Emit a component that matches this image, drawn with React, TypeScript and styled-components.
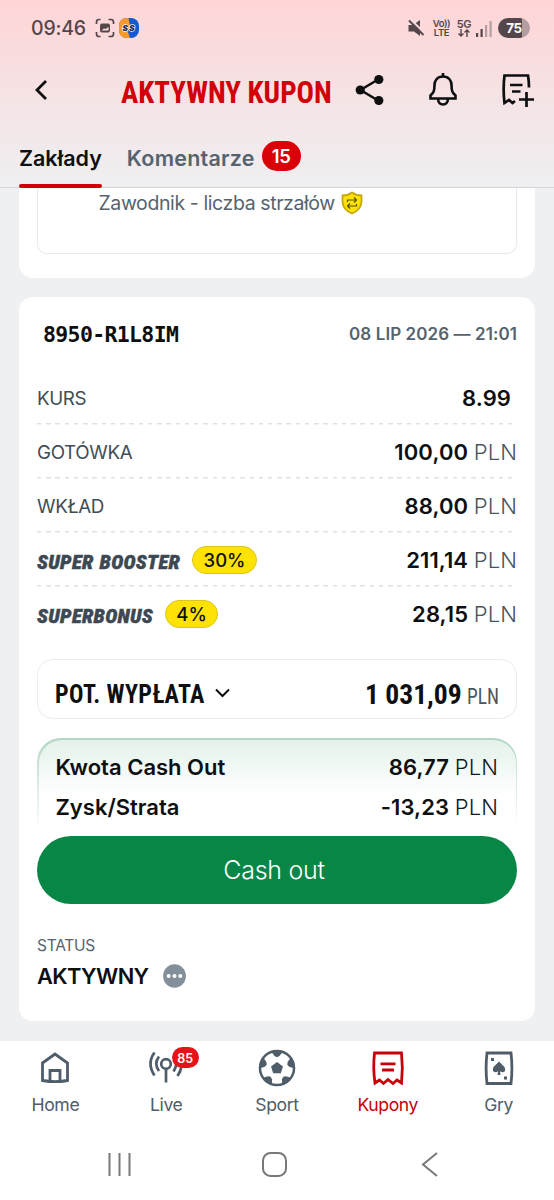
import React from 'react';
import styled, { createGlobalStyle } from 'styled-components';

const Global = createGlobalStyle`
  * { box-sizing: border-box; }
  html, body { margin: 0; padding: 0; }
  body { background: #eff0f2; font-family: Inter, 'Noto Sans', sans-serif; color: #0d0f11; }
`;

const Screen = styled.div`
  width: 554px;
  height: 1200px;
  display: flex;
  flex-direction: column;
  overflow: hidden;
  background: #eff0f2;
`;

const Header = styled.header`
  flex: none;
  height: 188px;
  display: flex;
  flex-direction: column;
  background: linear-gradient(#ffd5d6 0, #f9dddf 60px, #f4e5e6 110px, #f1eaec 150px, #efeff1 187px);
  box-shadow: inset 0 -1px 0 #d3d5d8;
`;

const StatusBar = styled.div`
  height: 56px;
  display: flex;
  align-items: center;
  padding: 0 24px 0 31px;
  color: #54464a;
`;

const Clock = styled.span`
  width: 64px;
  font-size: 19.5px;
  font-weight: 500;
  line-height: 24px;
  letter-spacing: -0.2px;
`;

const Gap = styled.span`
  flex: 1;
`;

const Network = styled.span<{ $w: number }>`
  width: ${(p) => p.$w}px;
  display: flex;
  flex-direction: column;
  align-items: center;
  font-size: 9.5px;
  font-weight: 600;
  line-height: 9px;
  white-space: nowrap;
  letter-spacing: -0.4px;
`;

const Generation = styled.span`
  font-size: 11px;
`;

const Battery = styled.span`
  width: 32px;
  height: 20px;
  margin-left: 6px;
  border-radius: 10px;
  background: linear-gradient(90deg, #54464a 75%, #b39ea2 75%);
  color: #fff;
  font-size: 13.5px;
  font-weight: 700;
  line-height: 20px;
  letter-spacing: -0.3px;
  text-align: center;
`;

const TitleRow = styled.div`
  height: 68px;
  display: flex;
  align-items: center;
  padding: 0 18px 0 33px;
`;

const Title = styled.h1`
  width: 210px;
  margin: 6px 24px 0 71px;
  font: 700 31px/36px Roboto, sans-serif;
  font-stretch: 75%;
  color: #d20008;
  white-space: nowrap;
`;

const Condensed = styled.span<{ $x: number }>`
  display: inline-block;
  transform: scaleX(${(p) => p.$x});
  transform-origin: left center;
`;

const Tabs = styled.nav`
  flex: 1;
  display: flex;
  padding-left: 19px;
`;

const Tab = styled.div<{ $active?: boolean }>`
  position: relative;
  display: flex;
  align-items: center;
  height: 64px;
  padding-top: 4px;
  margin-right: 25px;
  font-size: 21.5px;
  font-weight: ${(p) => (p.$active ? 570 : 600)};
  letter-spacing: ${(p) => (p.$active ? 0 : 0.22)}px;
  white-space: nowrap;
  color: ${(p) => (p.$active ? '#0d0f11' : '#56636e')};

  &::after {
    content: '';
    display: ${(p) => (p.$active ? 'block' : 'none')};
    position: absolute;
    left: 0;
    right: 0;
    bottom: 0;
    height: 4.5px;
    border-radius: 2px;
    background: #d20008;
  }
`;

const Count = styled.span`
  width: 39px;
  height: 30px;
  margin: -4px 0 0 7px;
  border-radius: 15px;
  background: #d90007;
  color: #fff;
  font-size: 18.5px;
  letter-spacing: -0.3px;
  line-height: 30px;
  text-align: center;
`;

const Content = styled.main`
  flex: 1;
  padding: 0 19px;
`;

const BetCard = styled.section`
  height: 90px;
  padding: 0 18px;
  background: #fff;
  border-radius: 0 0 14px 14px;
`;

const Bet = styled.div`
  height: 66px;
  display: flex;
  padding: 3px 0 0 60.5px;
  border: 1.5px solid #e8e9eb;
  border-top: 0;
  border-radius: 0 0 10px 10px;
  font-size: 19.5px;
  font-weight: 370;
  line-height: 24px;
  letter-spacing: -0.4px;
  color: #56636e;
  white-space: nowrap;
`;

const Market = styled.span`
  width: 242px;
`;

const Coupon = styled.section`
  height: 724px;
  margin-top: 19px;
  padding: 20px 18px 0;
  background: #fff;
  border-radius: 14px;
`;

const CouponHead = styled.div`
  height: 54px;
  display: flex;
  justify-content: space-between;
  padding-left: 6px;
  line-height: 35px;
  white-space: nowrap;
`;

const Code = styled.span`
  font: 700 21.5px/36px 'DejaVu Sans Mono', monospace;
  letter-spacing: -0.65px;
`;

const When = styled.span`
  font-size: 17px;
  font-weight: 580;
  letter-spacing: 0.08px;
  color: #56636e;
`;

const Row = styled.div<{ $last?: boolean }>`
  height: 54px;
  display: flex;
  align-items: center;
  background: ${(p) =>
    p.$last ? 'none' : 'repeating-linear-gradient(90deg, #dfe0e2 0 4.4px, #fff 4.4px 9.24px) 0 52px / 475px 1.5px no-repeat'};
`;

const Label = styled.span`
  font-size: 18.8px;
  font-weight: 370;
  letter-spacing: -0.37px;
  color: #414d57;
`;

const Promo = styled.span<{ $w: number }>`
  width: ${(p) => p.$w}px;
  margin-top: 3px;
  font: italic 900 21px/26px Roboto, sans-serif;
  font-stretch: 75%;
  letter-spacing: 0.3px;
  word-spacing: 1px;
  color: #3d4852;
  white-space: nowrap;
  -webkit-text-stroke: 0.4px #3d4852;
`;

const Percent = styled.span<{ $w: number }>`
  width: ${(p) => p.$w}px;
  height: 28px;
  margin-top: -1px;
  border: 1.5px solid #d9c816;
  border-radius: 14px;
  background: #ffe205;
  font-size: 18.5px;
  font-weight: 500;
  line-height: 26px;
  text-align: center;
`;

const Amount = styled.span<{ $end?: number }>`
  margin-left: auto;
  margin-right: ${(p) => p.$end ?? 0}px;
  font-size: 22px;
  font-weight: 570;
  letter-spacing: 0.1px;
  white-space: nowrap;
`;

const Currency = styled.span<{ $dark?: boolean }>`
  font-weight: 360;
  color: ${(p) => (p.$dark ? '#15191c' : '#4a555f')};
`;

const Payout = styled.div`
  height: 60px;
  margin-top: 18px;
  display: flex;
  align-items: center;
  padding: 11px 17px 0 17px;
  border: 1.5px solid #ebecee;
  border-radius: 16px;
  font-family: Roboto, sans-serif;
  font-stretch: 75%;
  white-space: nowrap;
`;

const PayoutLabel = styled.span`
  width: 160px;
  font-size: 25px;
  font-weight: 700;
  letter-spacing: 0.4px;
`;

const Chevron = styled.svg`
  margin-top: -4px;
`;

const PayoutValue = styled.span`
  width: 102px;
  margin-left: auto;
  font-size: 28px;
  font-weight: 700;
`;

const PayoutUnit = styled.span`
  width: 32px;
  margin-top: 3px;
  font-size: 22px;
  color: #4a555f;
`;

const CashBox = styled.div`
  height: 98px;
  margin-top: 19px;
  padding: 1.5px;
  border-radius: 24px 24px 0 0;
  background: linear-gradient(#b3d6c4, #fff 92px);
`;

const CashInner = styled.div`
  height: 96.5px;
  padding: 7px 17.5px 0 17px;
  border-radius: 23px 23px 0 0;
  background: linear-gradient(#e3f2ea, #fff 56px);
`;

const CashLine = styled.div`
  height: 40px;
  display: flex;
  align-items: center;
  font-size: 22px;
  font-weight: 580;
`;

const CashButton = styled.button`
  display: block;
  width: 480px;
  height: 68px;
  padding: 0 6px 0 0;
  border: 0;
  border-radius: 34px;
  background: #088646;
  color: #fff;
  font: 360 25px/68px Inter, sans-serif;
  letter-spacing: -0.25px;
`;

const StatusLabel = styled.div`
  margin-top: 32px;
  font-size: 15.5px;
  font-weight: 370;
  letter-spacing: -0.25px;
  line-height: 20px;
  color: #56636e;
`;

const StatusValue = styled.div`
  display: flex;
  align-items: center;
  gap: 14px;
  height: 39px;
  font-size: 21.8px;
  font-weight: 560;
  letter-spacing: -0.6px;
`;

const BottomNav = styled.nav`
  flex: none;
  height: 89px;
  display: flex;
  background: #fff;
`;

const NavItem = styled.div<{ $active?: boolean }>`
  flex: 1;
  display: flex;
  flex-direction: column;
  align-items: center;
  padding-top: 7px;
  position: relative;
  font-size: 17.6px;
  font-weight: 380;
  letter-spacing: -0.4px;
  line-height: 24px;
  color: ${(p) => (p.$active ? '#c8000a' : '#4e5d69')};
`;

const NavIcon = styled.svg`
  width: 40px;
  height: 40px;
  margin-bottom: 5px;
`;

const LiveCount = styled.span`
  position: absolute;
  left: 61px;
  top: 6px;
  width: 27px;
  height: 21px;
  border-radius: 11px;
  background: #e8121a;
  color: #fff;
  font-size: 12.5px;
  font-weight: 600;
  letter-spacing: 0;
  line-height: 23px;
  text-align: center;
`;

const SystemBar = styled.footer`
  flex: none;
  height: 70px;
  display: flex;
  background: #fff;
`;

const ballAngles = [0, 72, 144, 216, 288];

export default function App() {
  return (
    <Screen>
      <Global />
      <Header>
        <StatusBar>
          <Clock>09:46</Clock>
          <svg width="20" height="20" viewBox="0 0 20 20" fill="none" stroke="currentColor" strokeWidth="1.7">
            <path d="M1.500 6V4Q1.500 1.500 4 1.500H5.500M13.500 1.500H16Q18.500 1.500 18.500 4V6M18.500 14V16Q18.500 18.500 16 18.500H13.500M5.500 18.500H4Q1.500 18.500 1.500 16V14" />
            <rect x="5" y="5.500" width="10" height="9" rx="2" fill="currentColor" stroke="none" />
            <path d="M6.500 12.500L9 10.500L10.500 11L13.500 9V12.500Z" fill="#fbd9db" stroke="none" />
          </svg>
          <svg width="20" height="20" viewBox="0 0 20 20" style={{ marginLeft: 4 }}>
            <rect width="20" height="20" rx="8" fill="#1459cf" />
            <path d="M9.500 0H8Q0 0 0 8V12Q0 20 8 20H11L9 14L11 8Z" fill="#f59a2d" />
            <text x="3.500" y="12.800" fontSize="8" fontWeight="900" fontStyle="italic" fontFamily="Inter" fill="#172153" stroke="#fff" strokeWidth="1.300" paintOrder="stroke">S</text>
            <text x="10.300" y="12.800" fontSize="8" fontWeight="900" fontStyle="italic" fontFamily="Inter" fill="#172153" stroke="#fff" strokeWidth="1.300" paintOrder="stroke">S</text>
          </svg>
          <Gap />
          <svg width="17" height="18" viewBox="0 0 17 18" style={{ marginRight: 6 }}>
            <path d="M.5 6H5L12 1V17L6 12.500H.5Z" fill="currentColor" />
            <path d="M1 -1L18 15.500" stroke="#fadadc" strokeWidth="2.200" />
            <path d="M1 1.500L15.500 16" stroke="currentColor" strokeWidth="1.900" />
          </svg>
          <Network $w={21}><span>Vo))</span><span>LTE</span></Network>
          <Network $w={24}>
            <Generation>5G</Generation>
            <svg width="12" height="8" viewBox="0 0 12 8" fill="none" stroke="currentColor" strokeWidth="1.400"><path d="M3 0V7M.5 4.500L3 7L5.500 4.500M9 8V1M6.500 3.500L9 1L11.500 3.500" /></svg>
          </Network>
          <svg width="16" height="17" viewBox="0 0 16 17"><path d="M0 13H2.200V17H0ZM4.500 9H6.700V17H4.500Z" fill="currentColor" /><path d="M9 5H11.200V17H9ZM13.500 1H15.700V17H13.500Z" fill="#b39ea2" /></svg>
          <Battery>75</Battery>
        </StatusBar>
        <TitleRow>
          <svg width="17" height="22" viewBox="0 0 17 22" fill="none" stroke="#0d0f11" strokeWidth="2.800"><path d="M13 2L4 11L13 20" /></svg>
          <Title><Condensed $x={0.934}>AKTYWNY KUPON</Condensed></Title>
          <svg width="30" height="32" viewBox="0 0 30 32" fill="#0d0f11"><path d="M23.500 5.300L5.500 16L23.500 26.700" fill="none" stroke="#0d0f11" strokeWidth="2.500" /><circle cx="23.800" cy="5.500" r="4.600" /><circle cx="5.200" cy="16" r="4.600" /><circle cx="23.800" cy="26.500" r="4.600" /></svg>
          <svg width="30" height="36" viewBox="0 0 30 36" fill="none" stroke="#0d0f11" strokeWidth="2.600" style={{ marginLeft: 43 }}><path d="M15 1V5M15 4.500C9 4.500 6.500 9 6.500 13C6.500 20 5 21 2.500 23.500V26.500H27.500V23.500C25 21 23.500 20 23.500 13C23.500 9 21 4.500 15 4.500ZM10 27Q10.500 32.500 15 32.500T20 27" /></svg>
          <svg width="34" height="36" viewBox="0 0 34 36" fill="none" stroke="#0d0f11" strokeWidth="2.700" style={{ marginLeft: 43 }}><path d="M28 15.500Q28 9 27 3.500H3.500Q1.800 17 3.500 31L8 28L11.500 31L14 29M9 13H21.500M11 19.500H19.500M25.500 20V35M18 27.500H33" /></svg>
        </TitleRow>
        <Tabs>
          <Tab $active>Zakłady</Tab>
          <Tab>Komentarze<Count>15</Count></Tab>
        </Tabs>
      </Header>
      <Content>
        <BetCard>
          <Bet>
            <Market>Zawodnik - liczba strzałów</Market>
            <svg width="22" height="24" viewBox="0 0 22 24" fill="none"><path d="M11 1.500Q15 4.500 20.500 4.500V11Q20 19 11 22.500Q2 19 1.500 11V4.500Q7 4.500 11 1.500Z" fill="#ffe205" stroke="#c3a80d" strokeWidth="1.800" /><path d="M6.500 11V9H15M13 6.500L15.500 9L13 11.500M15.500 13V15H7M9 12.500L6.500 15L9 17.500" stroke="#55500c" strokeWidth="1.200" /></svg>
          </Bet>
        </BetCard>
        <Coupon>
          <CouponHead><Code>8950-R1L8IM</Code><When>08 LIP 2026 — 21:01</When></CouponHead>
          <Row><Label>KURS</Label><Amount $end={6}>8.99</Amount></Row>
          <Row><Label>GOTÓWKA</Label><Amount>100,00 <Currency>PLN</Currency></Amount></Row>
          <Row><Label>WKŁAD</Label><Amount>88,00 <Currency>PLN</Currency></Amount></Row>
          <Row><Promo $w={155}><Condensed $x={0.98}>SUPER BOOSTER</Condensed></Promo><Percent $w={65}>30%</Percent><Amount>211,14 <Currency>PLN</Currency></Amount></Row>
          <Row $last><Promo $w={128}><Condensed $x={0.98}>SUPERBONUS</Condensed></Promo><Percent $w={53}>4%</Percent><Amount>28,15 <Currency>PLN</Currency></Amount></Row>
          <Payout>
            <PayoutLabel><Condensed $x={0.96}>POT. WYPŁATA</Condensed></PayoutLabel>
            <Chevron width="15" height="10" viewBox="0 0 15 10" fill="none" stroke="#0d0f11" strokeWidth="2"><path d="M1 1.500L7.500 8L14 1.500" /></Chevron>
            <PayoutValue><Condensed $x={0.985}>1 031,09</Condensed></PayoutValue>
            <PayoutUnit><Condensed $x={0.88}>PLN</Condensed></PayoutUnit>
          </Payout>
          <CashBox>
            <CashInner>
              <CashLine>Kwota Cash Out<Amount>86,77 <Currency $dark>PLN</Currency></Amount></CashLine>
              <CashLine>Zysk/Strata<Amount>-13,23 <Currency $dark>PLN</Currency></Amount></CashLine>
            </CashInner>
          </CashBox>
          <CashButton>Cash out</CashButton>
          <StatusLabel>STATUS</StatusLabel>
          <StatusValue>AKTYWNY<svg width="23" height="24" viewBox="0 0 23 24"><ellipse cx="11.500" cy="12" rx="11.400" ry="11.800" fill="#83909b" /><g fill="#fff"><circle cx="5.700" cy="12" r="2" /><circle cx="11.500" cy="12" r="2" /><circle cx="17.300" cy="12" r="2" /></g></svg></StatusValue>
        </Coupon>
      </Content>
      <BottomNav>
        <NavItem>
          <NavIcon viewBox="0 0 40 40" fill="none" stroke="currentColor" strokeWidth="2.800"><path d="M7.500 15L20 6L32.500 15V32.500Q20 34.800 7.500 32.500ZM15 33V22.500H25V33" /></NavIcon>
          Home
        </NavItem>
        <NavItem>
          <NavIcon viewBox="0 0 40 40" fill="none" stroke="currentColor" strokeWidth="2.700"><circle cx="20" cy="16" r="4.800" /><path d="M20 20.500V34.500M13 8.500Q7.500 15.500 13 23M8.500 4.500Q.5 15.500 8.500 27.500M27.500 8Q33 15 27.500 23.500M31.500 28Q35 23 35.500 18" /></NavIcon>
          Live
          <LiveCount>85</LiveCount>
        </NavItem>
        <NavItem>
          <NavIcon viewBox="0 0 40 40" fill="currentColor">
            <circle cx="20" cy="20" r="18.300" />
            <circle cx="20" cy="20" r="15.800" fill="#fff" />
            <path d="M20 14L26 18.400L23.800 25.200H16.200L14 18.400Z" />
            {ballAngles.map((a) => (
              <path key={a} d="M14.500 4L17.500 8L20 9.200L22.500 8L25.500 4L20 2Z" transform={`rotate(${a} 20 20)`} />
            ))}
          </NavIcon>
          Sport
        </NavItem>
        <NavItem $active>
          <NavIcon viewBox="0 0 40 40" fill="none" stroke="currentColor" strokeWidth="2.800"><path d="M6.500 5H33.500Q35.200 20 33.500 35L29 32L25 35.500L20 31.500L15.500 35.500L11.500 32L7 35Q4.800 20 6.500 5ZM12.500 15.800H27.500M14 22H26" /></NavIcon>
          Kupony
        </NavItem>
        <NavItem>
          <NavIcon viewBox="0 0 40 40" fill="none" stroke="currentColor" strokeWidth="2.800"><path d="M8 5H32Q33.800 20 32 35.500H8Q6.200 20 8 5Z" /><path d="M20 13.500L25.500 19Q27.500 23.800 23.700 24.300Q22 24.300 21 23.300L21.500 27H18.500L19 23.300Q18 24.300 16.300 24.300Q12.500 23.800 14.500 19ZM12 10H15V13H12ZM25 28.500H28V31.500H25Z" fill="currentColor" stroke="none" /></NavIcon>
          Gry
        </NavItem>
      </BottomNav>
      <SystemBar>
        <svg width="554" height="70" viewBox="0 0 554 70" fill="none" stroke="#77787a" strokeWidth="2"><path d="M109.500 23V46M119.500 23V46M129.500 23V46M437 23L423 34.500L437 46" /><rect x="263" y="23" width="23" height="23" rx="7.500" /></svg>
      </SystemBar>
    </Screen>
  );
}
